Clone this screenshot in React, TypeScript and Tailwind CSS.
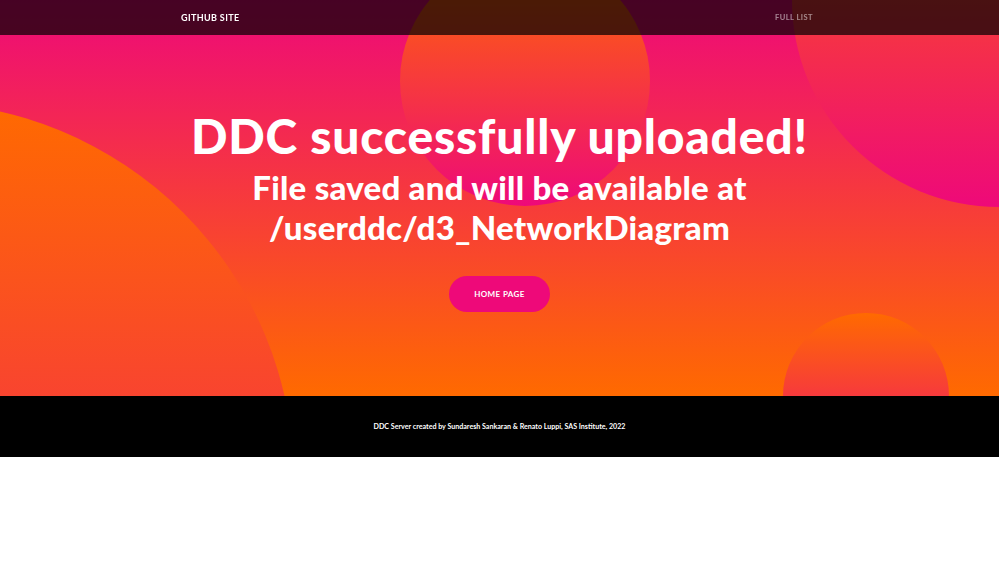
import React from "react";

export default function App() {
  return (
    <div className="w-full bg-white" style={{ fontFamily: "Lato, 'Liberation Sans', sans-serif" }}>
      <nav className="fixed top-0 left-0 right-0 z-20 h-[35px] bg-[rgba(0,0,0,0.7)] flex items-center justify-between pl-[181px] pr-[186px]">
        <span className="text-white text-[9px] font-bold tracking-[0.04em] uppercase">GitHub Site</span>
        <span className="text-white/50 text-[7.5px] font-bold tracking-[0.06em] uppercase">Full List</span>
      </nav>

      <header className="relative overflow-hidden h-[396px] bg-[linear-gradient(0deg,#ff6a00_0%,#ee0979_100%)] pt-[112px] text-center">
        <div className="absolute rounded-full w-[756px] h-[756px] left-[-462px] top-[102px] bg-[linear-gradient(0deg,#ee0979_0%,#ff6a00_100%)]" />
        <div className="absolute rounded-full w-[414px] h-[414px] left-[792px] top-[-207px] bg-[linear-gradient(0deg,#ee0979_0%,#ff6a00_100%)]" />
        <div className="absolute rounded-full w-[166px] h-[166px] left-[783px] top-[313px] bg-[linear-gradient(0deg,#ee0979_0%,#ff6a00_100%)]" />
        <div className="absolute rounded-full w-[250px] h-[250px] left-[400px] top-[-44px] bg-[linear-gradient(0deg,#ee0979_0%,#ff6a00_100%)]" />

        <div className="relative z-10 flex flex-col items-center">
          <h1 className="text-white text-[48px] leading-[48px] font-black tracking-[0.8px]">DDC successfully uploaded!</h1>
          <h2 className="mt-[7px] text-white text-[33px] leading-[40px] font-black tracking-[0.25px]">
            File saved and will be available at
            <br />
            /userddc/d3_NetworkDiagram
          </h2>
          <a className="mt-[29px] flex items-center justify-center w-[101px] h-[36px] rounded-full bg-[#ee0979] text-white text-[8px] font-bold tracking-[0.05em] uppercase">
            Home Page
          </a>
        </div>
      </header>

      <footer className="h-[61px] bg-black flex items-center justify-center pt-[2px]">
        <p className="text-white text-[7.1px] font-bold">
          DDC Server created by Sundaresh Sankaran &amp; Renato Luppi, SAS Institute, 2022
        </p>
      </footer>
      <div className="h-[105px] bg-white" />
    </div>
  );
}
